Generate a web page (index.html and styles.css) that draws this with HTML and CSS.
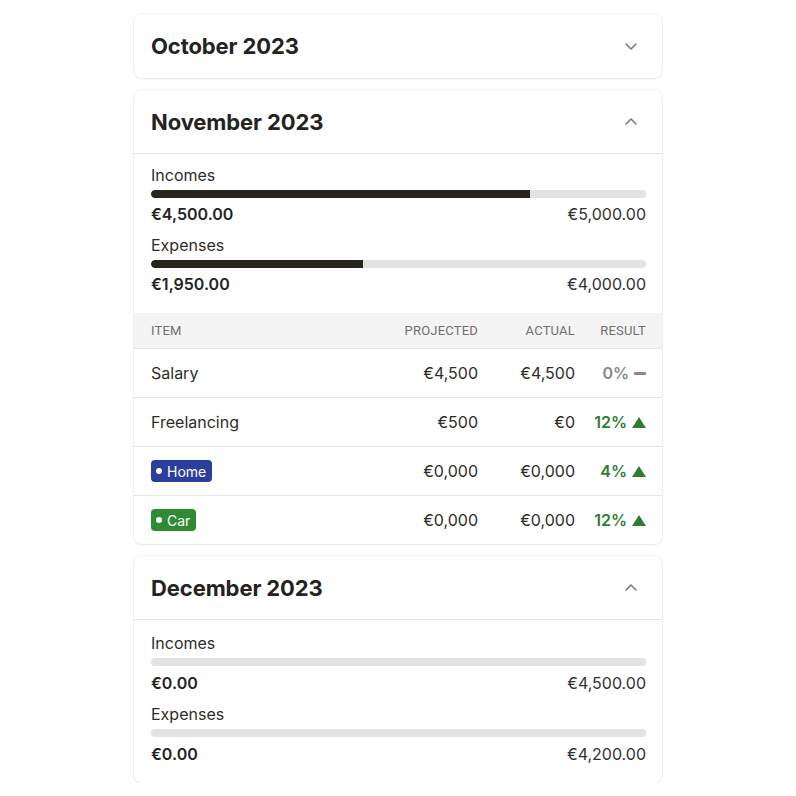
FILE: index.html
```html
<!DOCTYPE html>
<html>
<head>
<meta charset="utf-8">
<link rel="stylesheet" href="styles.css">
</head>
<body>
<div class="list">
  <section class="card">
    <header class="card-head">
      <h2>October 2023</h2>
      <svg class="chev" width="14" height="10" viewBox="0 0 14 10"><path d="M2 3 L7 8 L12 3" fill="none" stroke="#7a7a7a" stroke-width="1.6" stroke-linecap="round" stroke-linejoin="round"/></svg>
    </header>
  </section>

  <section class="card">
    <header class="card-head open">
      <h2>November 2023</h2>
      <svg class="chev" width="14" height="10" viewBox="0 0 14 10"><path d="M2 7 L7 2 L12 7" fill="none" stroke="#7a7a7a" stroke-width="1.6" stroke-linecap="round" stroke-linejoin="round"/></svg>
    </header>
    <div class="summary first">
      <div class="metric">
        <div class="label">Incomes</div>
        <div class="bar"><div class="fill" style="width:76.6%"></div></div>
        <div class="vals"><b>€4,500.00</b><span>€5,000.00</span></div>
      </div>
      <div class="metric">
        <div class="label">Expenses</div>
        <div class="bar"><div class="fill" style="width:42.8%"></div></div>
        <div class="vals"><b>€1,950.00</b><span>€4,000.00</span></div>
      </div>
    </div>
    <div class="table">
      <div class="row thead">
        <div class="c-item">ITEM</div>
        <div class="c-proj">PROJECTED</div>
        <div class="c-act">ACTUAL</div>
        <div class="c-res">RESULT</div>
      </div>
      <div class="row">
        <div class="c-item">Salary</div>
        <div class="c-proj">€4,500</div>
        <div class="c-act">€4,500</div>
        <div class="c-res neutral">0%<span class="dash"></span></div>
      </div>
      <div class="row">
        <div class="c-item">Freelancing</div>
        <div class="c-proj">€500</div>
        <div class="c-act">€0</div>
        <div class="c-res up">12%<span class="tri"></span></div>
      </div>
      <div class="row">
        <div class="c-item"><span class="badge blue"><i></i>Home</span></div>
        <div class="c-proj">€0,000</div>
        <div class="c-act">€0,000</div>
        <div class="c-res up">4%<span class="tri"></span></div>
      </div>
      <div class="row last">
        <div class="c-item"><span class="badge green"><i></i>Car</span></div>
        <div class="c-proj">€0,000</div>
        <div class="c-act">€0,000</div>
        <div class="c-res up">12%<span class="tri"></span></div>
      </div>
    </div>
  </section>

  <section class="card">
    <header class="card-head open">
      <h2>December 2023</h2>
      <svg class="chev" width="14" height="10" viewBox="0 0 14 10"><path d="M2 7 L7 2 L12 7" fill="none" stroke="#7a7a7a" stroke-width="1.6" stroke-linecap="round" stroke-linejoin="round"/></svg>
    </header>
    <div class="summary last">
      <div class="metric">
        <div class="label">Incomes</div>
        <div class="bar"></div>
        <div class="vals"><b>€0.00</b><span>€4,500.00</span></div>
      </div>
      <div class="metric">
        <div class="label">Expenses</div>
        <div class="bar"></div>
        <div class="vals"><b>€0.00</b><span>€4,200.00</span></div>
      </div>
    </div>
  </section>
</div>
</body>
</html>
```

FILE: styles.css
```css
* { box-sizing: border-box; }
html, body { margin: 0; padding: 0; background: #fff; }
body {
  font-family: Inter, "Noto Sans", sans-serif;
  color: #24231f;
}
.list {
  width: 528px;
  margin: 14px auto 0;
  display: flex;
  flex-direction: column;
  gap: 12px;
}
.card {
  background: #fff;
  border-radius: 8px;
  box-shadow: 0 0 0 1px rgba(0,0,0,0.035), 0 1px 3px rgba(0,0,0,0.07);
  overflow: hidden;
}
.card-head {
  height: 64px;
  padding: 0 24px 0 17px;
  display: flex;
  align-items: center;
  justify-content: space-between;
}
.card-head.open { border-bottom: 1px solid #e6e6e6; }
.card-head h2 {
  margin: 0;
  font-size: 22px;
  font-weight: 700;
  letter-spacing: -0.1px;
  color: #24231f;
}
.chev { display: block; }
.summary {
  padding: 11px 16px 16px 17px;
  display: flex;
  flex-direction: column;
  gap: 7px;
}
.summary.first { padding-top: 9px; padding-bottom: 17px; }
.summary.last { padding-top: 11px; padding-bottom: 17px; gap: 7px; }
.summary.last .bar { margin-bottom: 5px; }
.metric { display: flex; flex-direction: column; }
.label { font-size: 16px; line-height: 24px; color: #2e2d29; }
.bar {
  height: 8px;
  margin-top: 3px;
  margin-bottom: 4px;
  border-radius: 4px;
  background: #e3e3e3;
  overflow: hidden;
}
.fill { height: 100%; background: #27251e; border-radius: 4px 0 0 4px; }
.vals {
  display: flex;
  justify-content: space-between;
  font-size: 16px;
  line-height: 24px;
}
.vals b { font-weight: 600; color: #24231f; }
.vals span { color: #333230; }
.table { display: flex; flex-direction: column; }
.row {
  display: grid;
  grid-template-columns: 1fr 120px 97px 71px;
  align-items: center;
  height: 49px;
  padding: 0 16px 0 17px;
  border-bottom: 1px solid #e6e6e6;
  font-size: 16px;
  color: #2e2d29;
}
.row.last { border-bottom: none; height: 48px; }
.row.thead {
  height: 36px;
  background: #f4f4f4;
  font-family: Roboto, Inter, sans-serif;
  font-size: 13px;
  color: #6f6f6f;
  letter-spacing: 0.2px;
}
.c-proj, .c-act, .c-res { text-align: right; }
.c-res {
  display: flex;
  justify-content: flex-end;
  align-items: center;
  gap: 5px;
  font-weight: 600;
}
.thead .c-res { font-weight: 400; }
.neutral { color: #8a8a8a; }
.up { color: #2e7d32; }
.dash { width: 12px; height: 3px; background: #8a8a8a; border-radius: 1px; }
.tri {
  width: 0; height: 0;
  border-left: 7px solid transparent;
  border-right: 7px solid transparent;
  border-bottom: 11px solid #2e7d32;
}
.badge {
  display: inline-flex;
  align-items: center;
  gap: 5px;
  height: 22px;
  padding: 0 6px 0 5px;
  border-radius: 4px;
  color: #fff;
  font-size: 14px;
  font-weight: 400;
  vertical-align: middle;
}
.badge i { width: 6px; height: 6px; border-radius: 50%; background: #fff; }
.badge.blue { background: #2c3e9c; }
.badge.green { background: #2e8b34; }
```
